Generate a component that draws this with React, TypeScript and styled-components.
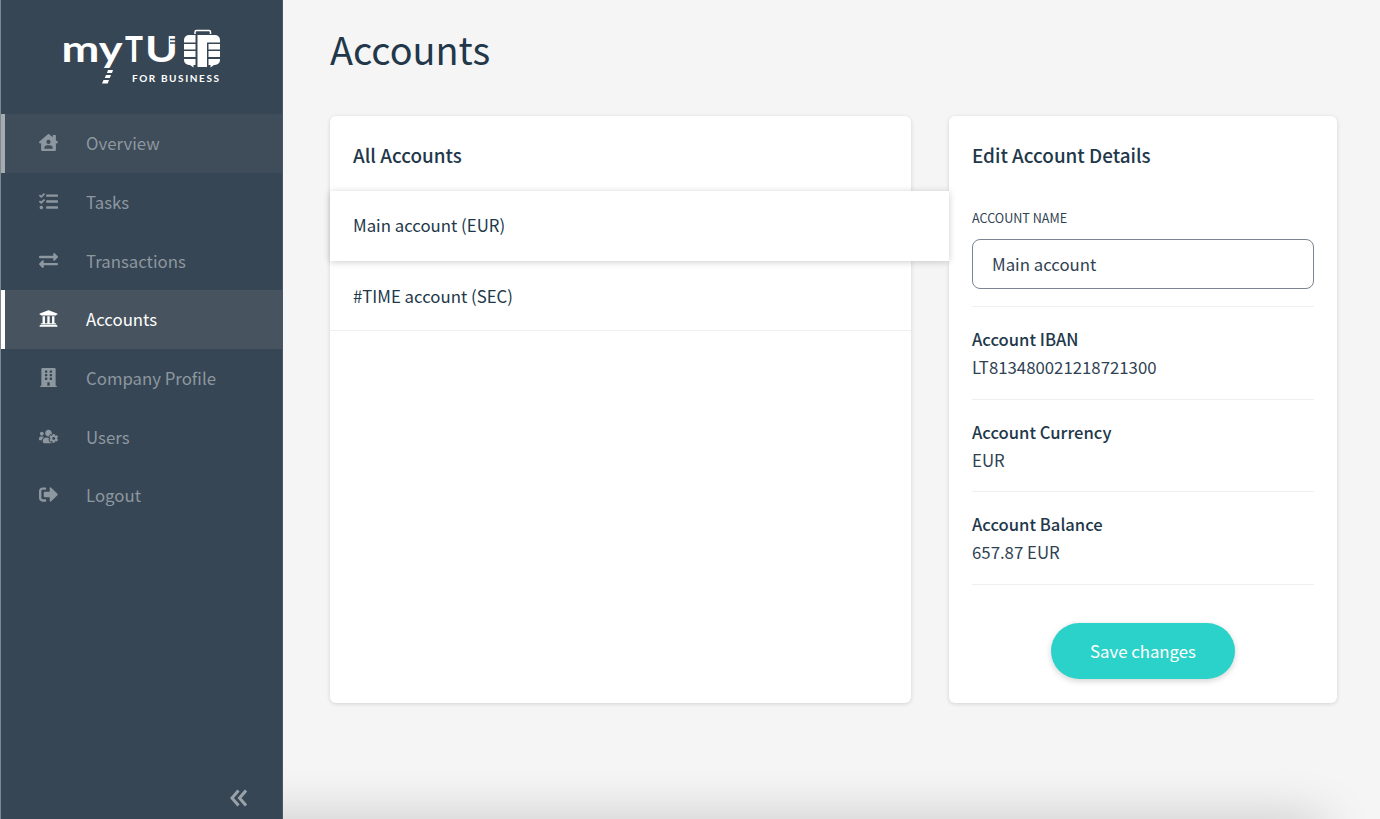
import React from "react";
import styled, { createGlobalStyle } from "styled-components";
import { FaHouseUser, FaTasks, FaExchangeAlt, FaUniversity, FaBuilding, FaUsersCog, FaSignOutAlt } from "react-icons/fa";

const Global = createGlobalStyle`
  html, body { margin: 0; padding: 0; height: 100%; overflow: hidden; background: #f5f5f5; }
  body { font-family: "Noto Sans CJK SC", "Noto Sans", sans-serif; color: #22384a; }
  * { box-sizing: border-box; }
`;

const Shell = styled.div`
  display: flex;
  width: 1380px;
  height: 819px;
  overflow: hidden;
  position: relative;
`;

const Sidebar = styled.aside`
  width: 283px;
  flex: none;
  height: 819px;
  background: #374654;
  border-left: 1px solid #7d8791;
  border-right: 1px solid #4a5865;
  display: flex;
  flex-direction: column;
  position: relative;
  z-index: 2;
`;

const LogoArea = styled.div`
  height: 114px;
  flex: none;
  padding: 28px 0 0 59px;
`;

const LogoSvg = styled.svg`
  display: block;
  overflow: visible;
`;

const Menu = styled.nav`
  display: flex;
  flex-direction: column;
`;

const MenuItem = styled.div<{ $state?: "active" | "hover" }>`
  height: 58.67px;
  display: flex;
  align-items: center;
  padding-left: 37px;
  gap: 28px;
  font-size: 16.8px;
  line-height: 24px;
  color: ${(p) => (p.$state === "active" ? "#ffffff" : "#8d97a0")};
  background: ${(p) => (p.$state === "active" ? "#47545f" : p.$state === "hover" ? "#3f4c59" : "transparent")};
  box-shadow: ${(p) =>
    p.$state === "active"
      ? "inset 4px 0 0 #ffffff"
      : p.$state === "hover"
      ? "inset 4px 0 0 #a4abb1"
      : "none"};
`;

const IconBox = styled.span`
  width: 20px;
  height: 20px;
  display: flex;
  align-items: center;
  justify-content: center;
  font-size: 19px;
  margin-top: -1px;
`;

const Collapse = styled.div`
  margin-top: auto;
  align-self: flex-end;
  margin-right: 35px;
  margin-bottom: 12px;
  color: #9aa2a9;
  display: flex;
`;

const Main = styled.main`
  flex: 1;
  padding: 0 43px 0 47px;
  display: flex;
  flex-direction: column;
`;

const Title = styled.h1`
  margin: 0;
  height: 116px;
  padding-top: 24px;
  font-size: 37.8px;
  line-height: 50px;
  font-weight: 400;
  color: #22384a;
`;

const Columns = styled.div`
  display: grid;
  grid-template-columns: 581px 388px;
  column-gap: 38px;
  height: 587px;
`;

const Card = styled.section`
  background: #fff;
  border-radius: 6px;
  box-shadow: 0 1px 4px rgba(0, 0, 0, 0.14);
  display: flex;
  flex-direction: column;
`;

const CardHead = styled.h2`
  margin: 0;
  height: 75px;
  padding: 25px 23px 0;
  font-size: 18.85px;
  line-height: 28px;
  font-weight: 500;
  color: #22384a;
`;

const ListRow = styled.div<{ $selected?: boolean }>`
  height: 70px;
  padding-left: 23px;
  display: flex;
  align-items: center;
  font-size: 16.8px;
  color: #22384a;
  background: #fff;
  ${(p) =>
    p.$selected
      ? `margin-right: -38px; padding-bottom: 2px; position: relative; z-index: 1; box-shadow: 0 1px 7px rgba(0,0,0,0.2);`
      : `border-bottom: 1px solid #efefef;`}
`;

const Form = styled.div`
  padding: 0 23px;
  display: flex;
  flex-direction: column;
  flex: 1;
  position: relative;
  z-index: 2;
`;

const FieldLabel = styled.label`
  display: block;
  font-size: 12.6px;
  line-height: 18px;
  margin-top: 18px;
  color: #2f4253;
`;

const TextField = styled.input`
  display: block;
  width: 100%;
  height: 50px;
  margin-top: 12px;
  border: 1.5px solid #7a8492;
  border-radius: 8px;
  padding: 0 0 1px 19px;
  font: inherit;
  font-size: 16.8px;
  color: #2f4253;
  background: #fff;
  outline: none;
`;

const FirstDivider = styled.div`
  height: 1px;
  background: #efefef;
  margin-top: 17px;
`;

const Info = styled.div`
  height: 92.7px;
  padding-top: 18px;
  border-bottom: 1px solid #efefef;
`;

const InfoTitle = styled.div`
  font-size: 16.6px;
  line-height: 28px;
  font-weight: 500;
  color: #22384a;
`;

const InfoValue = styled.div`
  font-size: 16.8px;
  line-height: 28px;
  color: #2f4253;
`;

const Save = styled.button`
  align-self: center;
  width: 184px;
  height: 56px;
  margin-top: 38px;
  padding: 0 0 1px;
  border: none;
  border-radius: 28px;
  background: #2bd2c9;
  color: #fff;
  font: inherit;
  font-size: 16.8px;
  box-shadow: 0 2px 6px rgba(0, 0, 0, 0.18);
`;

const BottomShade = styled.div`
  position: absolute;
  left: 150px;
  width: 1173px;
  top: 819px;
  height: 40px;
  box-shadow: 0 0 52px rgba(0, 0, 0, 0.2);
`;

const items = [
  { label: "Overview", Icon: FaHouseUser, state: "hover" as const },
  { label: "Tasks", Icon: FaTasks },
  { label: "Transactions", Icon: FaExchangeAlt },
  { label: "Accounts", Icon: FaUniversity, state: "active" as const },
  { label: "Company Profile", Icon: FaBuilding },
  { label: "Users", Icon: FaUsersCog },
  { label: "Logout", Icon: FaSignOutAlt },
];

const Logo = () => (
  <LogoSvg width="162" height="58" viewBox="0 0 162 58" fill="#fff">
    <text x="1.500" y="34" fontFamily="Lato, sans-serif" fontWeight="700" fontSize="36" textLength="61" lengthAdjust="spacingAndGlyphs">my</text>
    <path d="M48 42h5l-1 3h-5zM46 47h5l-1.200 3h-5zM43.500 52h5.500l-1.300 3.500h-5.700z" />
    <text x="65" y="34" fontFamily="Lato, sans-serif" fontWeight="700" fontSize="37" textLength="18" lengthAdjust="spacingAndGlyphs">T</text>
    <text x="85" y="34" fontFamily="Lato, sans-serif" fontWeight="700" fontSize="37" textLength="33" lengthAdjust="spacingAndGlyphs">U</text>
    <path d="M110 11.500h8M110 15h8" stroke="#374654" strokeWidth="1.300" fill="none" />
    <path d="M135 6V4a1.500 1.500 0 0 1 1.500-1.500h12.500A1.500 1.500 0 0 1 150.500 4v2" stroke="#fff" strokeWidth="1.500" fill="none" />
    <path d="M135.500 7v7.500H124V12a5 5 0 0 1 5-5zM124 16h11.500v5.500H124zM124 23h11.500v6H124zM124 31h11.500v6h-2v2.500L130 37h-1a5 5 0 0 1-5-5z" />
    <path d="M137.500 7H155a5 5 0 0 1 5 5v2.500h-13V39h-9.500z" />
    <path d="M148.500 16H160v5.500h-11.500zM148.500 23H160v6h-11.500zM148.500 31H160v1a5 5 0 0 1-5 5h-1l-3.500 2.500V37h-2z" />
    <text x="72" y="54" fontFamily="Lato, sans-serif" fontWeight="700" fontSize="10" textLength="87" lengthAdjust="spacing">FOR BUSINESS</text>
  </LogoSvg>
);

const Chevrons = () => (
  <svg width="18" height="18" viewBox="0 0 18 18" fill="none" stroke="currentColor" strokeWidth="3" strokeLinejoin="miter">
    <path d="M9.500 1.500 3 9l6.500 7.500" />
    <path d="M17 1.500 10.500 9l6.500 7.500" />
  </svg>
);

export default function App() {
  return (
    <Shell>
      <Global />
      <Sidebar>
        <LogoArea>
          <Logo />
        </LogoArea>
        <Menu>
          {items.map(({ label, Icon, state }) => (
            <MenuItem key={label} $state={state}>
              <IconBox>
                <Icon />
              </IconBox>
              {label}
            </MenuItem>
          ))}
        </Menu>
        <Collapse>
          <Chevrons />
        </Collapse>
      </Sidebar>
      <Main>
        <Title>Accounts</Title>
        <Columns>
          <Card>
            <CardHead>All Accounts</CardHead>
            <ListRow $selected>Main account (EUR)</ListRow>
            <ListRow>#TIME account (SEC)</ListRow>
          </Card>
          <Card>
            <CardHead>Edit Account Details</CardHead>
            <Form>
              <FieldLabel>ACCOUNT NAME</FieldLabel>
              <TextField defaultValue="Main account" readOnly />
              <FirstDivider />
              <Info>
                <InfoTitle>Account IBAN</InfoTitle>
                <InfoValue>LT813480021218721300</InfoValue>
              </Info>
              <Info>
                <InfoTitle>Account Currency</InfoTitle>
                <InfoValue>EUR</InfoValue>
              </Info>
              <Info>
                <InfoTitle>Account Balance</InfoTitle>
                <InfoValue>657.87 EUR</InfoValue>
              </Info>
              <Save>Save changes</Save>
            </Form>
          </Card>
        </Columns>
      </Main>
      <BottomShade />
    </Shell>
  );
}
